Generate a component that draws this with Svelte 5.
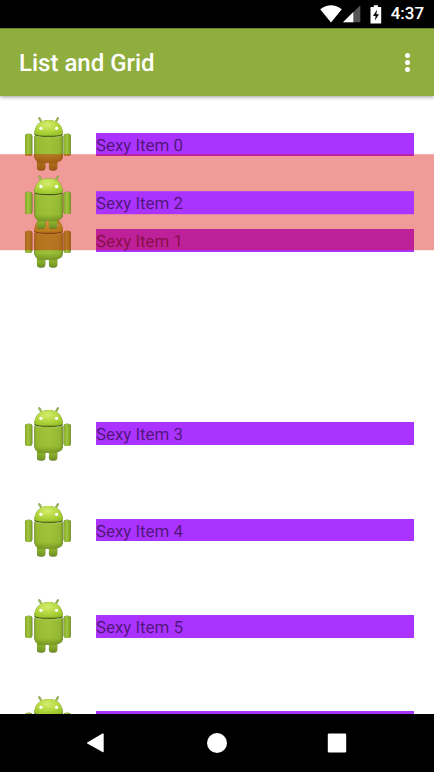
<script>
  const rows = [
    { id: 0 },
    { id: 1 },
    { id: 2, dragged: true },
    { id: 3 },
    { id: 4 },
    { id: 5 },
    { id: 6 }
  ];
  const dragOffset = -134.8;
</script>

{#snippet robot()}
  <svg class="robot" viewBox="4 13 174 174" aria-hidden="true">
    <defs>
      <radialGradient id="head" cx=".45" cy=".3" r=".7">
        <stop offset="0" stop-color="#d6ec70" />
        <stop offset=".5" stop-color="#b6db42" />
        <stop offset="1" stop-color="#98c02a" />
      </radialGradient>
      <linearGradient id="body" x1="0" x2="1">
        <stop offset="0" stop-color="#84a82a" />
        <stop offset=".1" stop-color="#98bd34" />
        <stop offset=".5" stop-color="#a0c43a" />
        <stop offset=".88" stop-color="#96bb34" />
        <stop offset="1" stop-color="#7b9d28" />
      </linearGradient>
      <linearGradient id="shade" x1="0" x2="0" y1="0" y2="1">
        <stop offset="0" stop-color="#405c00" stop-opacity="0" />
        <stop offset=".75" stop-color="#405c00" stop-opacity=".04" />
        <stop offset="1" stop-color="#2d4200" stop-opacity=".35" />
      </linearGradient>
      <linearGradient id="limb" x1="0" x2="1">
        <stop offset="0" stop-color="#84a82c" />
        <stop offset=".45" stop-color="#a2c63e" />
        <stop offset="1" stop-color="#779a24" />
      </linearGradient>
      <linearGradient id="leg" x1="0" x2="0" y1="0" y2="1">
        <stop offset="0" stop-color="#55720f" />
        <stop offset=".5" stop-color="#8ab02d" />
        <stop offset="1" stop-color="#6d8e20" />
      </linearGradient>
    </defs>
    <g class="figure">
      <path d="M65 23 73 36M121 23 113 36" stroke="#9dba52" stroke-width="6" stroke-linecap="round" />
      <rect x="58" y="142" width="25" height="38" rx="9" fill="url(#leg)" />
      <rect x="94" y="142" width="25" height="38" rx="9" fill="url(#leg)" />
      <rect x="22" y="69" width="22" height="67" rx="8" fill="url(#limb)" />
      <rect x="138" y="69" width="22" height="67" rx="8" fill="url(#limb)" />
      <path d="M50 76Q93 84 136 76V137Q135 152 119 154Q93 159 67 154Q51 152 50 137Z" fill="url(#body)" />
      <path d="M50 76Q93 84 136 76V137Q135 152 119 154Q93 159 67 154Q51 152 50 137Z" fill="url(#shade)" />
      <path d="M50 71C50 43 68 28 93 28S136 43 136 71Q132 78 93 78T50 71Z" fill="url(#head)" />
      <path d="M51 72Q59 77 93 77T135 72" fill="none" stroke="#405a12" stroke-width="3.2" />
      <path d="M53 77Q61 81 93 81T133 77" fill="none" stroke="#b0d14e" stroke-width="1.5" />
      <circle cx="70" cy="53" r="5" fill="#fff" />
      <circle cx="117" cy="53" r="5" fill="#fff" />
    </g>
  </svg>
{/snippet}

<div class="screen">
  <div class="status">
    <svg class="wifi" viewBox="0 0 22 18"><path d="M11 17.4.2 4.2Q11-3.6 21.8 4.2Z" fill="#fff" /></svg>
    <svg class="signal" viewBox="0 0 18 18"><path d="M0 17.2 17.3.3V17.2Z" fill="#555" /><path d="M0 17.2 10.3 7.1V17.2Z" fill="#fff" /></svg>
    <svg class="battery" viewBox="0 0 12 19"><path d="M3.8.3h4.2v1.6h3.2v16.6H.5V1.9h3.3z" fill="#fff" /><path d="M7 4.8 3 11h2.6l-.7 4.6L9 9.2H6.4z" fill="#000" /></svg>
    <span class="clock">4:37</span>
  </div>

  <header class="toolbar">
    <h1>List and Grid</h1>
    <div class="more"><i></i><i></i><i></i></div>
  </header>

  <main class="list">
    {#each rows as row (row.id)}
      <div
        class="row"
        class:dragged={row.dragged}
        style:transform={row.dragged ? `translateY(${dragOffset}px)` : null}
      >
        {@render robot()}
        <div class="label">Sexy Item {row.id}</div>
      </div>
    {/each}
  </main>

  <nav class="navbar">
    <div><svg viewBox="0 0 24 24"><path d="M3.2 11.5 18.5 2.6Q19.7 2 19.7 3.3V20.3Q19.7 21.6 18.5 21L3.2 12.5Q2.6 12 3.2 11.5Z" fill="#fff" /></svg></div>
    <div><svg viewBox="0 0 24 24"><circle cx="12" cy="12" r="10" fill="#fff" /></svg></div>
    <div><svg viewBox="0 0 24 24"><rect x="2.8" y="2.6" width="18.4" height="18.8" rx="1.2" fill="#fff" /></svg></div>
  </nav>
</div>

<style>
  :global(body) {
    margin: 0;
    overflow: hidden;
  }
  .screen {
    width: 434px;
    height: 772px;
    display: flex;
    flex-direction: column;
    overflow: hidden;
    background: #fff;
    font-family: Roboto, sans-serif;
    text-rendering: geometricPrecision;
  }
  .status {
    flex: none;
    height: 28px;
    box-sizing: border-box;
    padding-right: 10px;
    display: flex;
    justify-content: flex-end;
    align-items: center;
    background: #000;
  }
  .wifi {
    width: 22px;
    height: 18px;
    margin-right: 1px;
  }
  .signal {
    width: 18px;
    height: 18px;
    margin-right: 9px;
  }
  .battery {
    width: 12px;
    height: 19px;
    margin-right: 8.5px;
  }
  .clock {
    color: #fff;
    font-size: 16.9px;
    font-weight: 500;
    line-height: 30px;
  }
  .toolbar {
    flex: none;
    position: relative;
    z-index: 2;
    height: 68px;
    box-sizing: border-box;
    padding: 0 24.5px 0 19px;
    border-top: 1px solid #6c852f;
    display: flex;
    align-items: center;
    justify-content: space-between;
    background: #8fae3d;
    box-shadow: 0 1px 4px rgba(0, 0, 0, 0.4);
  }
  h1 {
    margin: 0;
    padding-top: 1px;
    color: #fff;
    font-size: 24px;
    font-weight: 500;
    line-height: 28px;
  }
  .more {
    display: flex;
    flex-direction: column;
    gap: 2.3px;
  }
  .more i {
    width: 5px;
    height: 5px;
    border-radius: 50%;
    background: #fff;
  }
  .list {
    flex: 1;
    min-height: 0;
    overflow: hidden;
  }
  .row {
    height: 96.44px;
    box-sizing: border-box;
    padding: 0 19.6px 0 19.3px;
    display: flex;
    align-items: center;
    gap: 19.2px;
  }
  .dragged {
    position: relative;
    z-index: 1;
    background: rgba(221, 5, 0, 0.4);
  }
  .robot {
    flex: none;
    width: 57.9px;
    height: 57.9px;
  }
  .figure {
    filter: drop-shadow(0 0 2px rgba(0, 0, 0, 0.6));
  }
  .label {
    flex: 1;
    height: 22.9px;
    background: #aa33ff;
    color: rgba(0, 0, 0, 0.54);
    font-size: 16.88px;
    line-height: 26px;
    text-indent: -0.4px;
    white-space: nowrap;
  }
  .navbar {
    flex: none;
    height: 58px;
    box-sizing: border-box;
    padding-right: 0.8px;
    display: flex;
    justify-content: center;
    gap: 96.5px;
    align-items: center;
    background: #000;
  }
  .navbar div,
  .navbar svg {
    display: block;
    width: 24px;
    height: 24px;
  }
</style>
